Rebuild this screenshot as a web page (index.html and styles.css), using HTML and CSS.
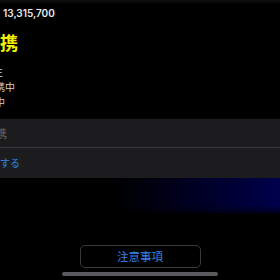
FILE: index.html
```html
<!DOCTYPE html>
<html lang="ja">
<head>
<meta charset="utf-8">
<link rel="stylesheet" href="styles.css">
</head>
<body>
<div class="screen">
  <div class="amount">13,315,700</div>
  <div class="title">連携</div>
  <div class="info">
    <div class="line l1">未生</div>
    <div class="line l2">連携中</div>
    <div class="line l3">連携中</div>
  </div>
  <div class="panel">
    <div class="row muted">未連携</div>
    <div class="divider"></div>
    <div class="row action">連携する</div>
  </div>
  <div class="glow"></div>
  <div class="footer">
    <button class="notice">注意事項</button>
    <div class="homebar"></div>
  </div>
</div>
</body>
</html>
```
FILE: styles.css
```css
html, body {
  margin: 0;
  padding: 0;
}
body {
  background: linear-gradient(#121214 0, #000 4px);
  width: 280px;
  height: 280px;
  overflow: hidden;
  font-family: "Noto Sans CJK JP", "Noto Sans", sans-serif;
  color: #fff;
}
.screen {
  display: flex;
  flex-direction: column;
  height: 280px;
}
.amount {
  height: 26px;
  line-height: 26px;
  padding-left: 3px;
  font-family: "Inter", "Roboto", sans-serif;
  font-weight: 600;
  font-size: 10px;
  color: #e8e8e8;
}
.title {
  height: 32px;
  line-height: 32px;
  font-size: 18px;
  font-weight: 700;
  color: #f6f200;
  text-indent: -18px;
  white-space: nowrap;
}
.info {
  padding-top: 6px;
}
.line {
  height: 15px;
  line-height: 15px;
  font-size: 10px;
  color: #cfcfcf;
  white-space: nowrap;
}
.l1 { text-indent: -17px; }
.l2 { text-indent: -15px; }
.l3 { text-indent: -25px; }
.panel {
  margin-top: 10px;
  background: #1c1c1e;
}
.row {
  font-size: 11px;
  white-space: nowrap;
}
.muted {
  height: 28px;
  line-height: 28px;
  color: #66666b;
  text-indent: -26px;
}
.divider {
  height: 1px;
  background: #38383a;
}
.action {
  height: 30px;
  line-height: 30px;
  font-size: 10px;
  color: #2f86f0;
  text-indent: -20px;
}
.glow {
  height: 35px;
  background:
    linear-gradient(to bottom, rgba(0,0,0,0) 75%, rgba(0,0,0,0.5) 100%),
    linear-gradient(to right, rgba(0,0,0,0) 40%, #00001a 62%, #000035 82%, #00004c 100%);
}
.footer {
  flex: 1;
  display: flex;
  flex-direction: column;
  align-items: center;
  justify-content: flex-end;
  padding-bottom: 4px;
}
.notice {
  width: 121px;
  height: 23px;
  padding: 0;
  background: #000;
  border: 1px solid #3a3a3c;
  border-radius: 5px;
  color: #3384ec;
  font-family: "Noto Sans CJK JP", sans-serif;
  font-size: 11.5px;
  line-height: 21px;
}
.homebar {
  margin-top: 4px;
  width: 156px;
  height: 4px;
  border-radius: 2px;
  background: #5a5a5e;
}
```
